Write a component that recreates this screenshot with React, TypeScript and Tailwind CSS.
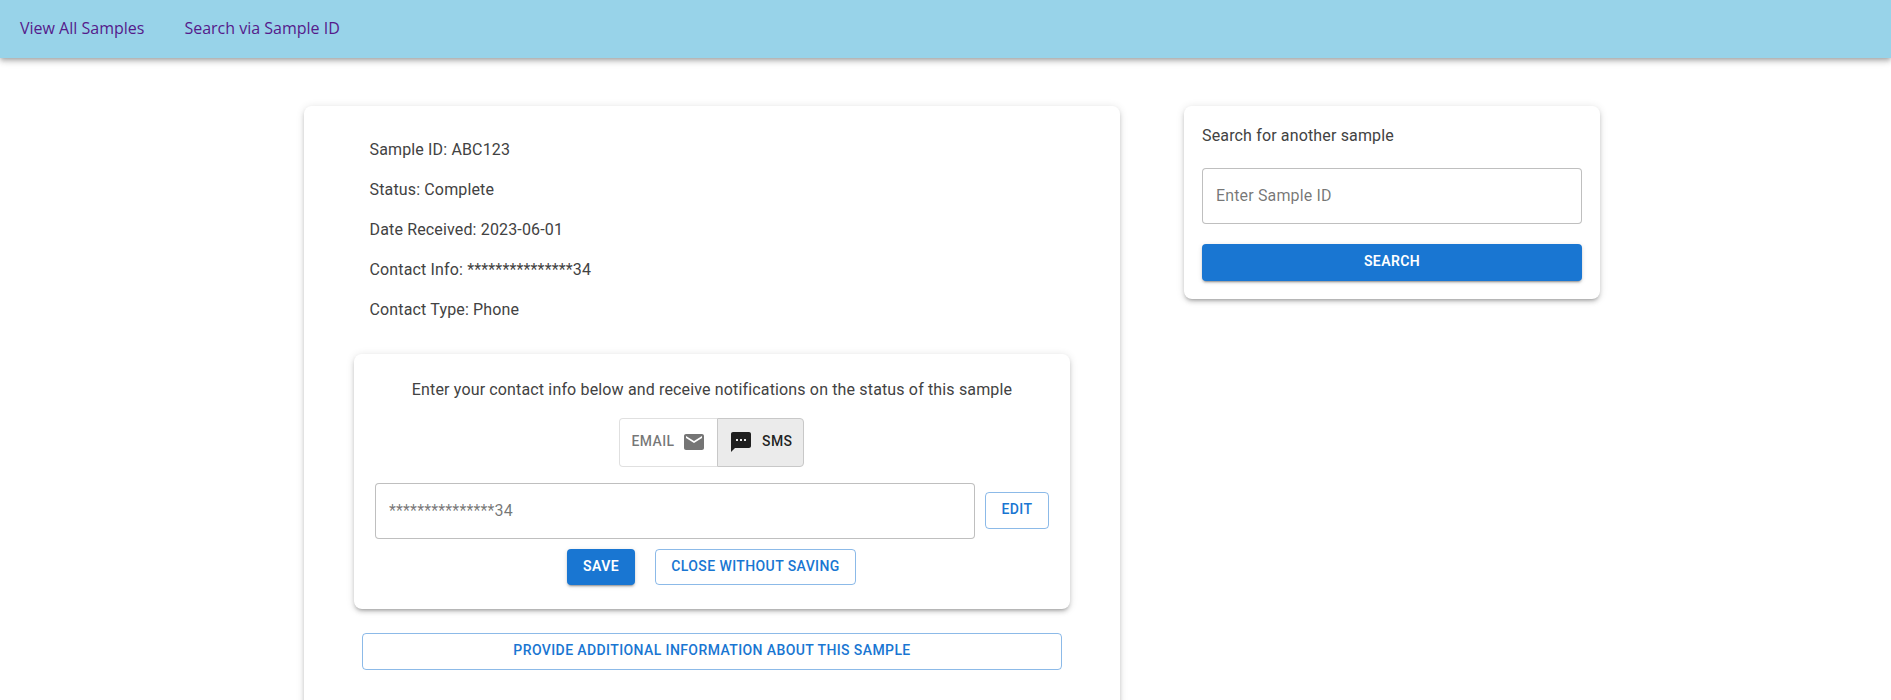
import { MdEmail, MdTextsms } from "react-icons/md";

const cardShadow =
  "shadow-[0_3px_3px_-2px_rgba(0,0,0,0.2),0_3px_4px_0_rgba(0,0,0,0.14),0_1px_8px_0_rgba(0,0,0,0.12)]";
const buttonBase =
  "flex items-center justify-center rounded-[4px] text-sm leading-[24.5px] font-medium tracking-[0.02857em] uppercase pb-0.5";
const outlined = `${buttonBase} border border-[#1976d2]/50 text-[#1976d2]`;
const contained = `${buttonBase} bg-[#1976d2] text-white font-semibold shadow-[0_3px_1px_-2px_rgba(0,0,0,0.2),0_2px_2px_0_rgba(0,0,0,0.14),0_1px_5px_0_rgba(0,0,0,0.12)]`;
const input =
  "h-14 rounded-[4px] border border-black/25 px-[13px] pb-0.5 text-base tracking-[0.00938em] text-black/60 placeholder:text-black/55 outline-none bg-white";

const details = [
  "Sample ID: ABC123",
  "Status: Complete",
  "Date Received: 2023-06-01",
  "Contact Info: ***************34",
  "Contact Type: Phone",
];

export default function App() {
  return (
    <div className="h-[700px] overflow-hidden bg-white font-[Roboto,sans-serif] text-base tracking-[0.00938em] text-[#424242]">
      <nav className="flex h-[58px] items-center gap-10 bg-[#98d3e9] px-5 pb-0.5 font-['Open_Sans',sans-serif] tracking-normal text-[#551a8b] shadow-[0_2px_4px_-1px_rgba(0,0,0,0.2),0_4px_5px_0_rgba(0,0,0,0.14),0_1px_10px_0_rgba(0,0,0,0.12)]">
        <a>View All Samples</a>
        <a>Search via Sample ID</a>
      </nav>

      <div className="flex items-start gap-16 pt-12 pl-[304px]">
        <main className={`h-[700px] w-[816px] rounded-lg px-[50px] pt-8 ${cardShadow}`}>
          <div className="flex flex-col gap-4 pl-[15.5px]">
            {details.map((line) => (
              <p key={line} className="leading-6">
                {line}
              </p>
            ))}
          </div>

          <section className={`mt-8 h-[255px] w-[716px] rounded-lg px-[21px] pt-6 ${cardShadow}`}>
            <p className="text-center leading-6">
              Enter your contact info below and receive notifications on the status of this sample
            </p>
            <div className="mt-4 flex h-[49px] justify-center pr-0.5 text-sm font-medium tracking-[0.02857em]">
              <button className="flex w-[98px] items-center justify-between rounded-l-[4px] border border-r-0 border-black/12 pr-[11px] pb-px pl-3 text-black/54">
                <span className="pb-0.5">EMAIL</span>
                <MdEmail size={24} />
              </button>
              <button className="flex w-[87px] items-center justify-between rounded-r-[4px] border border-[#c8c8c8] bg-[#ebebeb] pr-2.5 pb-px pl-[11px] text-black/87">
                <MdTextsms size={24} />
                <span className="pb-0.5">SMS</span>
              </button>
            </div>
            <div className="mt-4 flex items-start gap-2.5">
              <input className={`${input} w-[600px]`} placeholder="***************34" />
              <button className={`${outlined} mt-[9px] h-[37px] w-16`}>Edit</button>
            </div>
            <div className="mt-2.5 flex justify-center gap-5 pr-px">
              <button className={`${contained} h-9 w-[68px]`}>Save</button>
              <button className={`${outlined} h-9 w-[201px]`}>Close without saving</button>
            </div>
          </section>

          <button className={`${outlined} mt-6 ml-2 h-[37px] w-[700px]`}>
            Provide additional information about this sample
          </button>
        </main>

        <aside className={`flex h-[193px] w-[416px] flex-col rounded-lg px-[18px] pt-[18px] ${cardShadow}`}>
          <p className="leading-6">Search for another sample</p>
          <input className={`${input} mt-5`} placeholder="Enter Sample ID" />
          <button className={`${contained} mt-5 h-[37px]`}>Search</button>
        </aside>
      </div>
    </div>
  );
}
